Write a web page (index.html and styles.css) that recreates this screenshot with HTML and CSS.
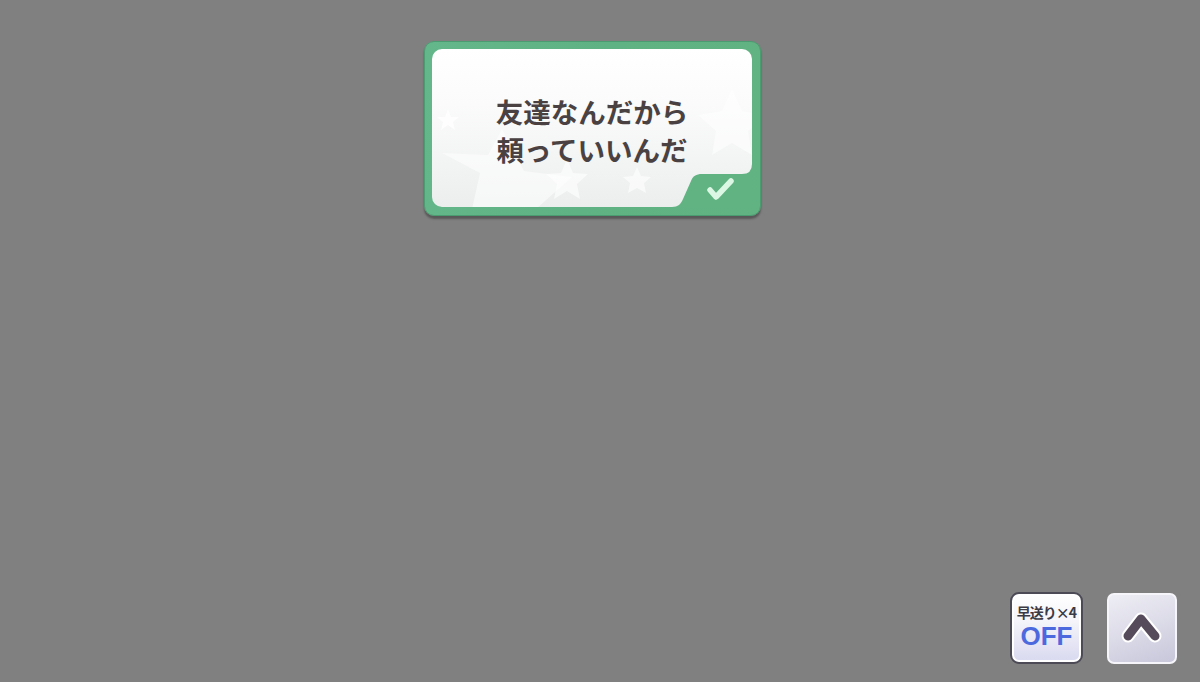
FILE: index.html
```html
<!DOCTYPE html>
<html lang="ja">
<head>
    <meta charset="UTF-8">
    <title>選択肢</title>
    <link rel="stylesheet" href="styles.css">
</head>
<body>
<div class="screen">
    <div class="choice_area">
        <div class="choice">
            <div class="choice_panel">
                <svg class="choice_stars" width="320" height="158" viewBox="0 0 320 158">
                    <polygon points="16,60 19,68 27,68 21,73 23,81 16,76 9,81 11,73 5,68 13,68" fill="#ffffff" opacity="0.8"/>
                    <polygon points="70,80 92,122 140,128 104,160 40,160 48,124 10,104 56,106" fill="#ffffff" opacity="0.5"/>
                    <polygon points="135,110 141,124 156,125 145,135 148,150 135,142 122,150 125,135 114,125 129,124" fill="#ffffff" opacity="0.6"/>
                    <polygon points="205,118 209,127 219,128 212,134 214,144 205,139 196,144 198,134 191,128 201,127" fill="#ffffff" opacity="0.6"/>
                    <polygon points="300,40 310,62 334,66 316,82 320,106 300,94 280,106 284,82 266,66 290,62" fill="#ffffff" opacity="0.55"/>
                </svg>
                <div class="choice_text">友達なんだから<br>頼っていいんだ</div>
                <svg class="choice_notch" width="84" height="52" viewBox="0 0 84 52">
                    <path d="M0,52 L2,52 C8,52 11,49 13,44 L21,26 C23,21 26,19 32,19 L72,19 Q82,19 82,9 L82,0 L84,0 L84,52 Z" fill="#61b382"/>
                    <polyline points="40,35 46,42 61,26" fill="none" stroke="#dcf7e4" stroke-width="5.5" stroke-linecap="round" stroke-linejoin="round"/>
                </svg>
            </div>
        </div>
    </div>
    <div class="control_bar">
        <div class="btn_fast">
            <div class="btn_fast_label">早送り×4</div>
            <div class="btn_fast_state">OFF</div>
        </div>
        <div class="btn_up">
            <svg width="66" height="67" viewBox="0 0 66 67">
                <polyline points="19,41 32,24 46,41" fill="none" stroke="#ffffff" stroke-width="13" stroke-linecap="round" stroke-linejoin="round"/>
                <polyline points="19,41 32,24 46,41" fill="none" stroke="#564b5a" stroke-width="9" stroke-linecap="round" stroke-linejoin="round"/>
            </svg>
        </div>
    </div>
</div>
</body>
</html>
```

FILE: styles.css
```css
body{
    margin: 0;
    background-color: #808080;
    font-family: "Noto Sans CJK JP", "Noto Sans", sans-serif;
}
.screen{
    box-sizing: border-box;
    width: 1200px;
    height: 682px;
    display: flex;
    flex-direction: column;
}
.choice_area{
    flex: 1;
    padding: 41px 0 0 424px;
}
.choice{
    box-sizing: border-box;
    width: 337px;
    height: 175px;
    padding: 7px 8px 8px 7px;
    border-radius: 10px;
    border: 1px solid #4c9c72;
    background: linear-gradient(100deg, #64b78a 0%, #5fb283 50%, #62b382 100%);
    box-shadow: 0 3px 2px rgba(40, 40, 40, 0.45);
}
.choice_panel{
    position: relative;
    height: 100%;
    border-radius: 10px 10px 0 10px;
    overflow: hidden;
    background: linear-gradient(180deg, #ffffff 0%, #fbfbfb 35%, #eceeee 100%);
    display: flex;
    align-items: center;
    justify-content: center;
}
.choice_stars{
    position: absolute;
    left: 0;
    top: 0;
}
.choice_text{
    position: relative;
    margin: 3px 0 0 0;
    color: #4a4242;
    font-size: 27.5px;
    font-weight: bold;
    line-height: 38px;
    text-align: center;
}
.choice_notch{
    position: absolute;
    right: -2px;
    bottom: 0;
}
.control_bar{
    display: flex;
    justify-content: flex-end;
    align-items: flex-end;
    gap: 24px;
    padding: 0 23px 18px 0;
}
.btn_fast{
    box-sizing: border-box;
    width: 73px;
    height: 72px;
    border: 2px solid #4b4a55;
    border-radius: 9px;
    background: linear-gradient(180deg, #ffffff 0%, #f4f4fa 40%, #d9d9f0 100%);
    box-shadow: inset 0 0 0 2px #ffffff;
    display: flex;
    flex-direction: column;
    align-items: center;
    padding-top: 9px;
}
.btn_fast_label{
    color: #3c3a44;
    font-size: 14px;
    font-weight: bold;
    line-height: 18px;
    letter-spacing: -1px;
}
.btn_fast_state{
    color: #4c6ade;
    font-family: "Liberation Sans", Arial, sans-serif;
    font-size: 26px;
    font-weight: bold;
    line-height: 30px;
}
.btn_up{
    box-sizing: border-box;
    width: 70px;
    height: 71px;
    border: 2px solid #f6f6fa;
    border-radius: 7px;
    background: linear-gradient(160deg, #eeeef5 0%, #dcdbe8 50%, #c8c7db 100%);
    display: flex;
    align-items: center;
    justify-content: center;
}
```
